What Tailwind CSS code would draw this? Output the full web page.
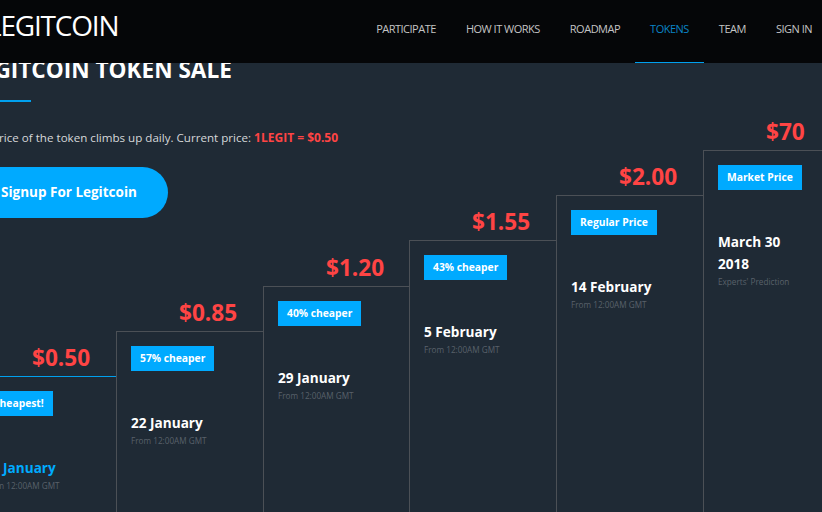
<!DOCTYPE html>
<html lang="en">
<head>
  <meta charset="UTF-8" />
  <title>Legitcoin Token Sale</title>
  <script src="https://cdn.jsdelivr.net/npm/@tailwindcss/browser@4"></script>
</head>
<body class="bg-[#1f2a35] font-['Open_Sans',sans-serif] overflow-hidden">
  <div class="w-[822px] h-[512px] overflow-hidden">

    <!-- Header -->
    <header class="relative z-10 h-[63px] bg-[#050608] flex justify-between pr-[10px]">
      <div class="-ml-[13px] pt-[5px] text-[28px] leading-[40px] font-normal tracking-[-1.2px] text-white">LEGITCOIN</div>
      <nav class="flex text-[11px] leading-[58px] text-[#c4c4c4] tracking-[-0.5px]">
        <a class="px-[15px]">PARTICIPATE</a>
        <a class="px-[15px]">HOW IT WORKS</a>
        <a class="px-[15px]">ROADMAP</a>
        <a class="px-[15px] h-[63px] text-[#0a84c6] border-b border-[#00a0ee]">TOKENS</a>
        <a class="px-[15px]">TEAM</a>
        <a class="pl-[15px]">SIGN IN</a>
      </nav>
    </header>

    <div class="-ml-[31px]">
      <!-- Intro -->
      <section class="h-[163px]">
        <h1 class="-mt-[8px] text-[22.6px] leading-[30px] font-bold text-white">LEGITCOIN TOKEN SALE</h1>
        <div class="mt-[15px] w-[62px] h-[2px] bg-[#00a0ee]"></div>
        <p class="mt-[27px] text-[11.6px] leading-[18px] text-[#d6d8da]">The price of the token climbs up daily. Current price: <span class="text-[12px] font-bold text-[#ff4444]">1LEGIT = $0.50</span></p>
        <a class="mt-[20px] flex items-center w-[199px] h-[51px] pl-[32px] rounded-r-[26px] bg-[#00aaff] text-[13.5px] font-bold text-white">Signup For Legitcoin</a>
      </section>

      <!-- Price steps -->
      <section class="-mt-[102px] flex items-start">
        <div class="w-[147px] shrink-0 mt-[227px]">
          <div class="pl-[63px] pb-[3px] text-[22.6px] leading-[30px] font-bold text-[#ff4444]">$0.50</div>
          <div class="h-[400px] border-t border-[#00a0ee] pl-[15px] pt-[12px]">
            <span class="inline-block px-[9px] text-[10.3px] leading-[25px] font-bold text-white bg-[#00aaff]">Cheapest!</span>
            <div class="mt-[41px] text-[13.6px] leading-[22px] font-bold text-[#00aaff]">15 January</div>
            <div class="text-[8.2px] leading-[14px] text-[#59616a]">From 12:00AM GMT</div>
          </div>
        </div>
        <div class="w-[147px] shrink-0 mt-[182px]">
          <div class="pl-[63px] pb-[3px] text-[22.6px] leading-[30px] font-bold text-[#ff4444]">$0.85</div>
          <div class="h-[400px] border-t border-l border-[#4b5056] pl-[14px] pt-[12px]">
            <span class="inline-block px-[9px] text-[10.3px] leading-[25px] font-bold text-white bg-[#00aaff]">57% cheaper</span>
            <div class="mt-[41px] text-[13.6px] leading-[22px] font-bold text-white">22 January</div>
            <div class="text-[8.2px] leading-[14px] text-[#59616a]">From 12:00AM GMT</div>
          </div>
        </div>
        <div class="w-[146px] shrink-0 mt-[137px]">
          <div class="pl-[63px] pb-[3px] text-[22.6px] leading-[30px] font-bold text-[#ff4444]">$1.20</div>
          <div class="h-[400px] border-t border-l border-[#4b5056] pl-[14px] pt-[12px]">
            <span class="inline-block px-[9px] text-[10.3px] leading-[25px] font-bold text-white bg-[#00aaff]">40% cheaper</span>
            <div class="mt-[41px] text-[13.6px] leading-[22px] font-bold text-white">29 January</div>
            <div class="text-[8.2px] leading-[14px] text-[#59616a]">From 12:00AM GMT</div>
          </div>
        </div>
        <div class="w-[147px] shrink-0 mt-[91px]">
          <div class="pl-[63px] pb-[3px] text-[22.6px] leading-[30px] font-bold text-[#ff4444]">$1.55</div>
          <div class="h-[400px] border-t border-l border-[#4b5056] pl-[14px] pt-[12px]">
            <span class="inline-block px-[9px] text-[10.3px] leading-[25px] font-bold text-white bg-[#00aaff]">43% cheaper</span>
            <div class="mt-[41px] text-[13.6px] leading-[22px] font-bold text-white">5 February</div>
            <div class="text-[8.2px] leading-[14px] text-[#59616a]">From 12:00AM GMT</div>
          </div>
        </div>
        <div class="w-[147px] shrink-0 mt-[46px]">
          <div class="pl-[63px] pb-[3px] text-[22.6px] leading-[30px] font-bold text-[#ff4444]">$2.00</div>
          <div class="h-[400px] border-t border-l border-[#4b5056] pl-[14px] pt-[12px]">
            <span class="inline-block px-[9px] text-[10.3px] leading-[25px] font-bold text-white bg-[#00aaff]">Regular Price</span>
            <div class="mt-[41px] text-[13.6px] leading-[22px] font-bold text-white">14 February</div>
            <div class="text-[8.2px] leading-[14px] text-[#59616a]">From 12:00AM GMT</div>
          </div>
        </div>
        <div class="w-[147px] shrink-0 mt-[1px]">
          <div class="pl-[63px] pb-[3px] text-[22.6px] leading-[30px] font-bold text-[#ff4444]">$70</div>
          <div class="h-[400px] border-t border-l border-[#4b5056] pl-[14px] pt-[12px]">
            <span class="inline-block px-[9px] text-[10.3px] leading-[25px] font-bold text-white bg-[#00aaff]">Market Price</span>
            <div class="mt-[41px] w-[90px] text-[13.6px] leading-[22px] font-bold text-white">March 30 2018</div>
            <div class="text-[8.2px] leading-[14px] text-[#59616a]">Experts' Prediction</div>
          </div>
        </div>
      </section>
    </div>
  </div>
</body>
</html>
